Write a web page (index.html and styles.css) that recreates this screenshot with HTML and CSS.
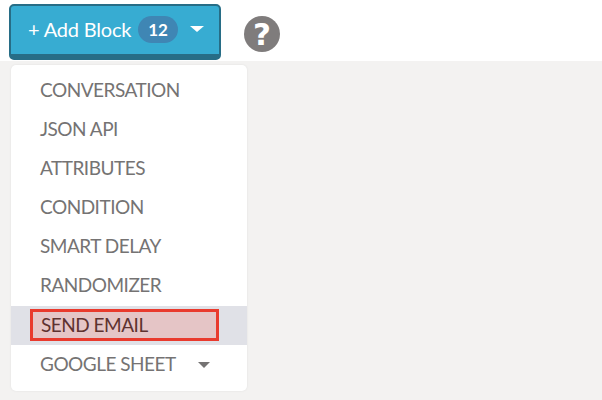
FILE: index.html
```html
<!DOCTYPE html>
<html lang="en">
<head>
    <meta charset="UTF-8">
    <title>Add Block</title>
    <link rel="stylesheet" href="styles.css">
</head>
<body>
    <div class="toolbar">
        <button class="add-btn" type="button">
            <span class="add-label">+ Add Block</span>
            <span class="count">12</span>
            <span class="caret caret-white"></span>
        </button>
        <div class="help">?</div>
    </div>
    <div class="canvas"></div>
    <ul class="menu">
        <li class="item">CONVERSATION</li>
        <li class="item">JSON API</li>
        <li class="item">ATTRIBUTES</li>
        <li class="item">CONDITION</li>
        <li class="item">SMART DELAY</li>
        <li class="item">RANDOMIZER</li>
        <li class="item active"><span class="mark">SEND EMAIL</span></li>
        <li class="item more"><span class="more-label">GOOGLE SHEET</span><span class="caret caret-grey"></span></li>
    </ul>
</body>
</html>
```

FILE: styles.css
```css
*{
    box-sizing:border-box;
    margin:0;
    padding:0;
}

body{
    width:602px;
    height:400px;
    overflow:hidden;
    position:relative;
    display:flex;
    flex-direction:column;
    background-color:#fff;
    font-family:'Lato','Noto Sans',sans-serif;
}

.toolbar{
    height:61px;
    padding:4px 0 0 9px;
    display:flex;
    align-items:flex-start;
}

.canvas{
    flex:1;
    background-color:#f3f2f1;
}

.add-btn{
    width:212px;
    height:56px;
    display:flex;
    align-items:center;
    padding:0 0 2px 17px;
    border:solid #276d86;
    border-width:2px 2px 6px 2px;
    border-radius:5px;
    background-color:#37acd2;
    color:#fff;
    font-family:inherit;
}

.add-label{
    width:110px;
    font-size:20px;
    letter-spacing:-0.2px;
    white-space:nowrap;
    text-align:left;
}

.count{
    width:40px;
    height:27px;
    border-radius:14px;
    background-color:#3f86b4;
    font-size:17px;
    font-weight:700;
    line-height:27px;
    text-align:center;
}

.caret{
    display:inline-block;
    width:0;
    height:0;
    border-style:solid;
    border-width:6px 7px 0 7px;
    border-color:transparent;
}

.caret-white{
    margin-left:12px;
    border-top-color:#fff;
}

.caret-grey{
    margin-left:1px;
    border-width:6px 6px 0 6px;
    border-top-color:#757373;
    margin-top:2px;
}

.help{
    width:36px;
    height:36px;
    margin:12px 0 0 23px;
    border-radius:50%;
    background-color:#7f7c7c;
    color:#fff;
    font-family:'DejaVu Sans',sans-serif;
    font-size:31px;
    font-weight:700;
    line-height:36px;
    text-align:center;
}

.menu{
    position:absolute;
    left:11px;
    top:65px;
    width:236px;
    height:326px;
    padding-top:6px;
    list-style:none;
    background-color:#fff;
    border-radius:5px;
    box-shadow:0 0 2px #ddd;
}

.item{
    height:39px;
    padding-left:29px;
    color:#757373;
    font-size:19px;
    line-height:38px;
    letter-spacing:-0.5px;
    white-space:nowrap;
}

.more{
    display:flex;
    align-items:center;
}

.more-label{
    width:157px;
}

.active{
    background-color:#e0e1e7;
    padding-left:19px;
    padding-top:3px;
    margin-top:1px;
    margin-bottom:-1px;
}

.mark{
    display:block;
    width:189px;
    height:32px;
    padding-left:8px;
    border:3px solid #e93a2d;
    background-color:#e5c5c6;
    color:#5e3230;
    line-height:25px;
}
```
